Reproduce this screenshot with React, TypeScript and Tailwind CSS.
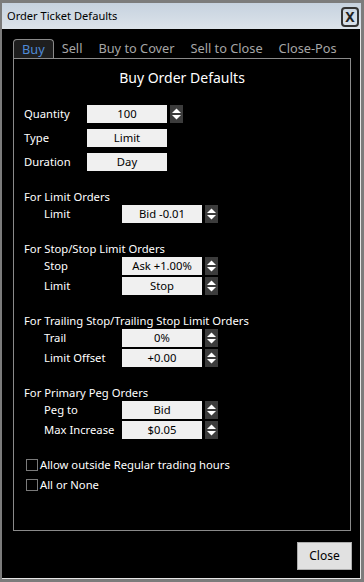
import type { ReactNode } from "react"

function Spinner() {
  return (
    <div className="ml-[3px] h-[18px] w-[13px] bg-[#3c3c3c]">
      <svg width="13" height="18" viewBox="0 0 13 18">
        <polygon points="2,8 6.5,3.5 11,8" fill="#ffffff" />
        <polygon points="2,10 6.5,14.5 11,10" fill="#ffffff" />
      </svg>
    </div>
  )
}

function Field({ value, spin }: { value: string; spin?: boolean }) {
  return (
    <div className="flex items-center">
      <div className="flex h-[18px] w-[80px] items-center justify-center bg-[#f0f0f0] text-[11.25px] leading-none text-black">
        {value}
      </div>
      {spin && <Spinner />}
    </div>
  )
}

function Row({ label, value, spin }: { label: string; value: string; spin?: boolean }) {
  return (
    <div className="flex h-[18px] items-center">
      <div className="w-[63px] text-[11.25px] text-white">{label}</div>
      <Field value={value} spin={spin} />
    </div>
  )
}

function SubRow({ label, value }: { label: string; value: string }) {
  return (
    <div className="flex h-[18px] items-center pl-[20px]">
      <div className="w-[78px] text-[11.25px] text-white">{label}</div>
      <Field value={value} spin />
    </div>
  )
}

function Section({ title, children }: { title: string; children: ReactNode }) {
  return (
    <div className="mt-[18px] flex flex-col">
      <div className="h-[16px] text-[11.25px] leading-[16px] text-white">{title}</div>
      <div className="flex flex-col gap-[2px]">{children}</div>
    </div>
  )
}

function Check({ label }: { label: string }) {
  return (
    <div className="flex h-[16px] items-center">
      <div className="ml-[2px] h-[12px] w-[12px] border border-[#7a7a7a]" />
      <span className="ml-[2px] text-[11.25px] text-white">{label}</span>
    </div>
  )
}

export default function App() {
  const tabs = ["Sell", "Buy to Cover", "Sell to Close", "Close-Pos"]

  return (
    <div
      className="flex h-[582px] w-[364px] flex-col bg-[#7c7c7c] pb-[3px] pl-[2px] pr-[3px] pt-[3px]"
      style={{ fontFamily: '"Noto Sans", "Open Sans", sans-serif' }}
    >
      {/* title bar */}
      <div className="flex h-[26px] items-start justify-between bg-gradient-to-b from-[#c6d2df] to-[#dce3ea] pl-[5px] pr-[2px]">
        <span className="mt-[5px] text-[11.1px] leading-[16px] text-black">Order Ticket Defaults</span>
        <div className="mt-[4px] flex h-[20px] w-[18px] items-center justify-center rounded-[4px] border-2 border-[#333] text-[14px] font-bold leading-none text-[#222]">
          X
        </div>
      </div>

      {/* body */}
      <div className="flex flex-1 flex-col border-b border-r border-[#e4e4e4] bg-black pb-[8px] pl-[11px] pr-[9px] pt-[10px]">
        <div className="flex h-[19px] items-end whitespace-nowrap">
          <div className="flex h-[19px] shrink-0 items-center rounded-t-[4px] border border-b-0 border-[#8a8a8a] bg-[#1e1e1e] px-[8px] text-[12.75px] leading-none text-[#4f8ad6]">
            Buy
          </div>
          {tabs.map((t) => (
            <div key={t} className="flex h-[19px] shrink-0 items-center px-[8px] text-[12.75px] leading-none text-[#a6a6a6]">
              {t}
            </div>
          ))}
        </div>

        <div className="flex h-[473px] flex-col border border-[#8a8a8a] px-[10px] pt-[9px]">
          <div className="h-[20px] text-center text-[14px] leading-[20px] text-white">Buy Order Defaults</div>

          <div className="mt-[17px] flex flex-col gap-[6px]">
            <Row label="Quantity" value="100" spin />
            <Row label="Type" value="Limit" />
            <Row label="Duration" value="Day" />
          </div>

          <Section title="For Limit Orders">
            <SubRow label="Limit" value="Bid -0.01" />
          </Section>

          <Section title="For Stop/Stop Limit Orders">
            <SubRow label="Stop" value="Ask +1.00%" />
            <SubRow label="Limit" value="Stop" />
          </Section>

          <Section title="For Trailing Stop/Trailing Stop Limit Orders">
            <SubRow label="Trail" value="0%" />
            <SubRow label="Limit Offset" value="+0.00" />
          </Section>

          <Section title="For Primary Peg Orders">
            <SubRow label="Peg to" value="Bid" />
            <SubRow label="Max Increase" value="$0.05" />
          </Section>

          <div className="mt-[18px] flex flex-col gap-[4px]">
            <Check label="Allow outside Regular trading hours" />
            <Check label="All or None" />
          </div>
        </div>

        <div className="mt-[11px] flex justify-end">
          <button className="-mr-[1px] h-[28px] w-[55px] border border-[#adadad] bg-[#e1e1e1] text-[12px] text-black">
            Close
          </button>
        </div>
      </div>
    </div>
  )
}
